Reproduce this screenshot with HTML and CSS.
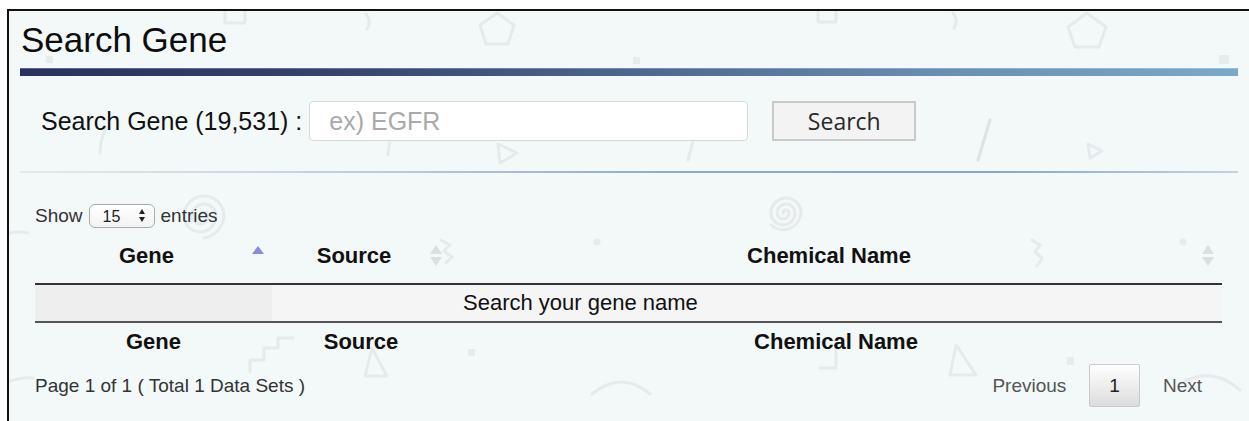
FILE: index.html
```html
<!DOCTYPE html>
<html lang="en">
<head>
<meta charset="utf-8">
<title>Search Gene</title>
<link rel="stylesheet" href="styles.css">
</head>
<body>
<div class="panel">
  <!-- faint doodle pattern behind the panel content -->
  <svg class="pattern" viewBox="9 11 1240 410" width="1240" height="410" aria-hidden="true">
    <g fill="none" stroke="#e6eaec" stroke-width="3" stroke-linecap="round" stroke-linejoin="round">
      <rect x="225" y="4" width="20" height="19"/>
      <path d="M366 14 q6 7 1 15"/>
      <polygon points="497,13 514,25 508,44 486,44 480,25"/>
      <rect x="818" y="4" width="18" height="18"/>
      <path d="M953 13 q6 7 1 15"/>
      <polygon points="1087,13 1106,27 1099,47 1075,47 1068,27"/>
      <path d="M106 128 q-6 12 -6 25"/>
      <path d="M394 127 q-5 14 -6 28"/>
      <path d="M498 144 l19 9 l-17 10 z"/>
      <path d="M693 141 l-5 19"/>
      <path d="M1088 144 l14 7 l-12 7 z"/>
      <path d="M783 213 a3 3 0 0 1 6 0 a6 6 0 0 1 -12 0 a9 9 0 0 1 18 0 a12 12 0 0 1 -24 0 a15 15 0 0 1 30 0 a18 18 0 0 1 -30 12"/>
      <path d="M200 216 a4 4 0 0 1 8 0 a8 8 0 0 1 -16 0 a12 12 0 0 1 24 0 a16 16 0 0 1 -32 0 a20 20 0 0 1 40 0 a24 24 0 0 1 -20 22"/>
      <path d="M441 240 l9 5 l-6 6 l8 6 l-6 6"/>
      <path d="M1032 240 l8 5 l-5 7 l7 6 l-5 8"/>
      <path d="M2 236 q12 -6 26 -3"/>
      <path d="M250 372 v-12 h14 v-12 h14 v-10 h15"/>
      <path d="M372 348 l-7 28 h22 z"/>
      <path d="M0 386 q16 -10 33 -8"/>
      <path d="M836 346 v22 h-16"/>
      <path d="M956 345 l-6 30 h26 z"/>
      <path d="M592 394 q30 -24 58 0"/>
      <path d="M1183 382 q30 -16 57 8"/>
    </g>
    <path d="M990 120 l-12 40" fill="none" stroke="#dde2e5" stroke-width="3" stroke-linecap="round"/>
    <g fill="#e7ebed">
      <rect x="46" y="56" width="7" height="7"/>
      <rect x="633" y="57" width="7" height="7"/>
      <rect x="1219" y="55" width="10" height="9"/>
      <circle cx="597" cy="242" r="3.5"/>
      <circle cx="1183" cy="242" r="3.5"/>
      <rect x="1067" y="357" width="7" height="8"/>
      <rect x="468" y="349" width="7" height="7"/>
    </g>
  </svg>

  <div class="panel-body">
    <h1 class="title">Search Gene</h1>
    <div class="title-bar"></div>

    <form class="search-row" onsubmit="return false">
      <label class="search-label" for="gene-query">Search Gene (19,531) :</label>
      <input id="gene-query" class="search-input" type="text" placeholder="ex) EGFR">
      <button class="search-btn" type="button">Search</button>
    </form>

    <div class="divider"></div>

    <div class="dt">
      <div class="dt-length">
        <span>Show</span>
        <span class="len-wrap">
          <select class="len-select">
            <option>15</option>
            <option>30</option>
            <option>50</option>
          </select>
        </span>
        <span>entries</span>
      </div>

      <table class="dt-table">
        <thead>
          <tr>
            <th class="col-gene sort-asc">Gene</th>
            <th class="col-source sort-both">Source</th>
            <th class="col-chem sort-both">Chemical Name</th>
          </tr>
        </thead>
        <tbody>
          <tr>
            <td class="sorted"></td>
            <td class="empty" colspan="2">Search your gene name</td>
          </tr>
        </tbody>
        <tfoot>
          <tr>
            <th>Gene</th>
            <th>Source</th>
            <th>Chemical Name</th>
          </tr>
        </tfoot>
      </table>

      <div class="dt-bottom">
        <div class="dt-info">Page 1 of 1 ( Total 1 Data Sets )</div>
        <div class="dt-paginate"><a class="pg disabled">Previous</a><a class="pg current">1</a><a class="pg disabled">Next</a></div>
      </div>
    </div>
  </div>
</div>
</body>
</html>
```

FILE: styles.css
```css
* {
  box-sizing: border-box;
}

html,
body {
  margin: 0;
  padding: 0;
  background: #fff;
}

body {
  font-family: "Liberation Sans", Arial, Helvetica, sans-serif;
  color: #111;
}

/* framed panel */
.panel {
  position: relative;
  margin: 9px 0 0 7px;
  height: 412px;
  border-top: 2px solid #111;
  border-left: 2px solid #111;
  background: #f3f8f9;
  overflow: hidden;
}

.pattern {
  position: absolute;
  left: 0;
  top: 0;
  width: 1240px;
  height: 410px;
  pointer-events: none;
}

.panel-body {
  position: relative;
  padding: 9px 11px 0 11px;
}

/* heading */
.title {
  margin: 0;
  padding-left: 1px;
  font-size: 35px;
  line-height: 40px;
  font-weight: normal;
  color: #0d0d0d;
}

.title-bar {
  height: 8px;
  margin-top: 8px;
  background: linear-gradient(to right, #28315f 0%, #34426e 25%, #4d6590 50%, #688db3 75%, #7aaac9 100%);
  box-shadow: inset 0 1px 0 rgba(255, 255, 255, 0.25);
}

/* search form */
.search-row {
  display: flex;
  align-items: center;
  height: 40px;
  margin: 25px 0 0 0;
  padding-left: 21px;
}

.search-label {
  font-size: 25px;
  color: #111;
  margin-right: 7px;
  white-space: nowrap;
}

.search-input {
  width: 439px;
  height: 40px;
  border: 1px solid #d9d9d9;
  border-radius: 4px;
  background: #fff;
  padding: 0 0 0 19px;
  font-family: "Liberation Sans", Arial, sans-serif;
  font-size: 25px;
  color: #333;
  outline: none;
}

.search-input::placeholder {
  color: #a9a9a9;
}

.search-btn {
  margin-left: 24px;
  width: 144px;
  height: 40px;
  padding: 0;
  border: 2px solid #c9c9c9;
  background: #f3f3f3;
  font-family: "Open Sans", "DejaVu Sans", sans-serif;
  font-size: 23px;
  color: #2a2a2a;
}

.divider {
  height: 2px;
  margin-top: 30px;
  background: linear-gradient(to right, #ebe7ea 0%, #c3d2de 25%, #89abc8 55%, #84a8c6 80%, #c0d5e2 100%);
}

/* data table block */
.dt {
  margin: 31px 16px 0 15px;
}

.dt-length {
  display: flex;
  align-items: center;
  height: 24px;
  font-size: 19px;
  color: #333;
}

.len-wrap {
  position: relative;
  display: inline-block;
  margin: 0 6px;
  height: 24px;
}

.len-select {
  appearance: none;
  -webkit-appearance: none;
  display: block;
  width: 66px;
  height: 24px;
  margin: 0;
  padding: 0 0 0 13px;
  border: 1px solid #aaa;
  border-radius: 6px;
  background: linear-gradient(#fff, #f3f3f3);
  font-family: "Liberation Sans", Arial, sans-serif;
  font-size: 16px;
  color: #222;
}

.len-wrap::before,
.len-wrap::after {
  content: "";
  position: absolute;
  left: 50px;
  width: 0;
  height: 0;
  border-left: 3.5px solid transparent;
  border-right: 3.5px solid transparent;
  pointer-events: none;
}

.len-wrap::before {
  top: 5px;
  border-bottom: 5px solid #222;
}

.len-wrap::after {
  top: 13px;
  border-top: 5px solid #222;
}

.dt-table {
  width: 100%;
  border-collapse: separate;
  border-spacing: 0;
  table-layout: fixed;
}

.col-gene {
  width: 237px;
}

.col-source {
  width: 178px;
}

.dt-table thead th {
  position: relative;
  padding: 15px 24px 15px 10px;
  line-height: 25px;
  font-size: 22px;
  font-weight: bold;
  text-align: center;
  color: #111;
  border-bottom: 2px solid #333;
}

/* sort indicators */
.sort-asc::before,
.sort-both::before,
.sort-both::after {
  content: "";
  position: absolute;
  right: 8px;
  width: 0;
  height: 0;
  border-left: 6px solid transparent;
  border-right: 6px solid transparent;
}

.sort-asc::before {
  top: 18px;
  border-bottom: 8px solid #8a8ae2;
}

.sort-both::before {
  top: 17px;
  border-bottom: 9px solid #dcdfe0;
}

.sort-both::after {
  top: 29px;
  border-top: 9px solid #dcdfe0;
}

.dt-table tbody td {
  padding: 5px 0;
  line-height: 26px;
  font-size: 22px;
  color: #111;
}

.dt-table td.sorted {
  background: #eeeeee;
}

.dt-table td.empty {
  background: #f5f5f5;
  padding-left: 191px;
  text-align: left;
}

.dt-table tfoot th {
  padding: 7px 10px;
  line-height: 24px;
  font-size: 22px;
  font-weight: bold;
  text-align: center;
  color: #111;
  border-top: 2px solid #555;
}

.dt-bottom {
  display: flex;
  justify-content: space-between;
  align-items: center;
  margin-top: 3px;
}

.dt-info {
  font-size: 19px;
  color: #333;
}

.dt-paginate {
  display: flex;
  font-size: 19px;
  line-height: 22px;
  white-space: nowrap;
}

.pg {
  display: block;
  margin-left: 3px;
  padding: 9.5px 19px;
  border: 1px solid transparent;
  border-radius: 2px;
  color: #555;
  cursor: default;
}

.pg.current {
  border-color: #cacaca;
  background: linear-gradient(#ffffff 0%, #dcdcdc 100%);
  color: #222;
}
```
